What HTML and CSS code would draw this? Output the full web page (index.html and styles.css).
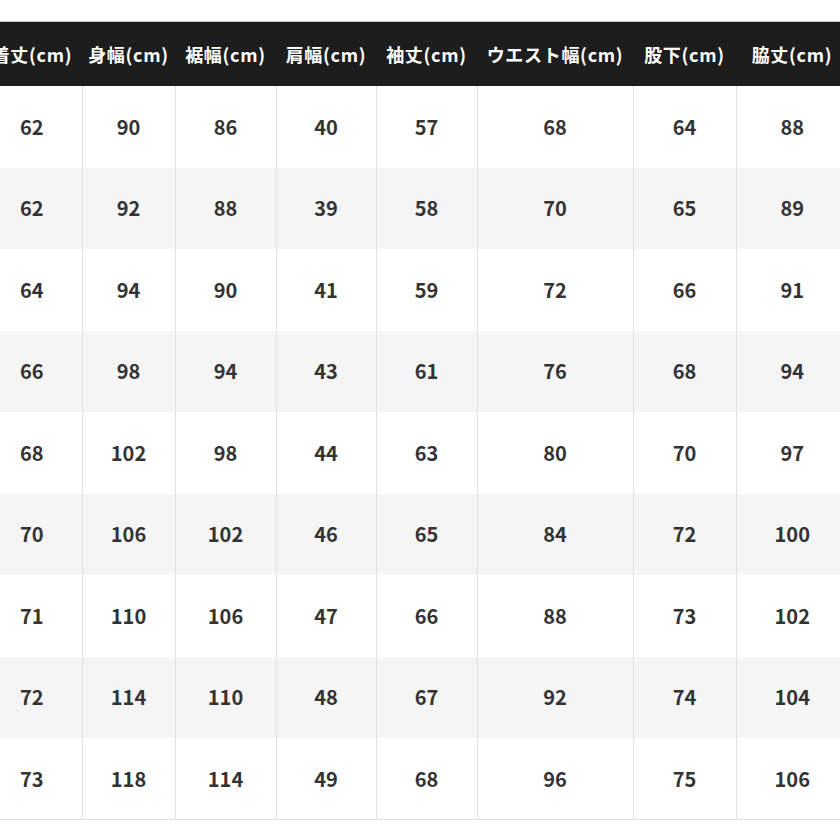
FILE: index.html
```html
<!DOCTYPE html>
<html lang="ja">
<head>
<meta charset="utf-8">
<link rel="stylesheet" href="styles.css">
</head>
<body>
<div class="wrap">
<table class="size">
<colgroup>
<col class="c1"><col class="c2"><col class="c3"><col class="c4"><col class="c5"><col class="c6"><col class="c7"><col class="c8">
</colgroup>
<thead>
<tr><th>着丈(cm)</th><th>身幅(cm)</th><th>裾幅(cm)</th><th>肩幅(cm)</th><th>袖丈(cm)</th><th>ウエスト幅(cm)</th><th>股下(cm)</th><th>脇丈(cm)</th></tr>
</thead>
<tbody>
<tr><td>62</td><td>90</td><td>86</td><td>40</td><td>57</td><td>68</td><td>64</td><td>88</td></tr>
<tr><td>62</td><td>92</td><td>88</td><td>39</td><td>58</td><td>70</td><td>65</td><td>89</td></tr>
<tr><td>64</td><td>94</td><td>90</td><td>41</td><td>59</td><td>72</td><td>66</td><td>91</td></tr>
<tr><td>66</td><td>98</td><td>94</td><td>43</td><td>61</td><td>76</td><td>68</td><td>94</td></tr>
<tr><td>68</td><td>102</td><td>98</td><td>44</td><td>63</td><td>80</td><td>70</td><td>97</td></tr>
<tr><td>70</td><td>106</td><td>102</td><td>46</td><td>65</td><td>84</td><td>72</td><td>100</td></tr>
<tr><td>71</td><td>110</td><td>106</td><td>47</td><td>66</td><td>88</td><td>73</td><td>102</td></tr>
<tr><td>72</td><td>114</td><td>110</td><td>48</td><td>67</td><td>92</td><td>74</td><td>104</td></tr>
<tr><td>73</td><td>118</td><td>114</td><td>49</td><td>68</td><td>96</td><td>75</td><td>106</td></tr>
</tbody>
</table>
</div>
</body>
</html>
```
FILE: styles.css
```css
html, body {
  margin: 0;
  padding: 0;
  background: #ffffff;
}
.wrap {
  width: 840px;
  height: 840px;
  overflow: hidden;
  padding-top: 21px;
  box-sizing: border-box;
}
.size {
  margin-left: -18px;
  border-collapse: collapse;
  table-layout: fixed;
  width: 866px;
  font-family: "Noto Sans CJK JP", "Noto Sans", sans-serif;
  font-weight: 700;
  border-top: 1px solid #c8c8c8;
  border-bottom: 1px solid #dcdcdc;
}
.c1 { width: 100px; }
.c2 { width: 93px; }
.c3 { width: 101px; }
.c4 { width: 100px; }
.c5 { width: 101px; }
.c6 { width: 156px; }
.c7 { width: 103px; }
.c8 { width: 112px; }
.size th {
  background: #1d1d1d;
  color: #ffffff;
  font-size: 18px;
  letter-spacing: 0.7px;
  height: 64px;
  padding: 0;
  text-align: center;
  white-space: nowrap;
  line-height: 1;
}
.size td {
  height: 81.5px;
  padding: 0;
  text-align: center;
  font-size: 20px;
  color: #333333;
  line-height: 1;
  border-left: 1px solid #e2e2e2;
  box-sizing: border-box;
}
.size td:first-child {
  border-left: none;
}
.size tbody tr:nth-child(even) td {
  background: #f5f5f5;
}
```
